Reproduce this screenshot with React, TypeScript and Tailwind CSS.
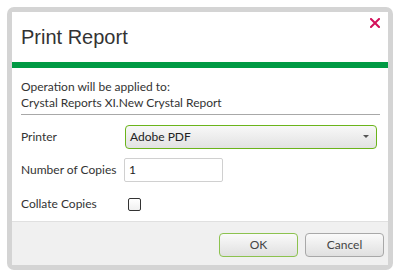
import React from "react";

export default function App() {
  const body = { fontFamily: "Lato, 'Noto Sans', sans-serif" };
  return (
    <div className="w-[400px] h-[277px] bg-white p-[7px]">
      <div className="w-[386px] h-[263px] rounded-[7px] bg-[#d4d4d4] p-[5px]">
        <div className="relative flex h-full flex-col bg-white" style={body}>
          <div className="h-[50px] pl-[9px] pt-[13px]">
            <div className="text-[20px] leading-[24px] text-[#333]" style={{ fontFamily: "'Liberation Sans', Arial, sans-serif" }}>
              Print Report
            </div>
          </div>
          <button className="absolute right-[6px] top-[4px] flex h-[14px] w-[14px] items-center justify-center">
            <svg width="10" height="10" viewBox="0 0 10 10">
              <path d="M1 1 L9 9 M9 1 L1 9" stroke="#d2105a" strokeWidth="2" strokeLinecap="square" />
            </svg>
          </button>
          <div className="h-[6px] bg-[#009a44]" />
          <div className="flex flex-1 flex-col pl-[9px] pr-[8px] pt-[11px] text-[12px] text-[#333]">
            <div className="leading-[16px]">Operation will be applied to:</div>
            <div className="leading-[16px]">Crystal Reports XI.New Crystal Report</div>
            <div className="mt-[3px] h-px bg-[#a8a8a8]" />
            <div className="mt-[10px] flex items-center">
              <div className="w-[104px]">Printer</div>
              <div className="flex h-[24px] w-[252px] items-center justify-between rounded-[4px] border-[1.5px] border-[#6bb41b] bg-gradient-to-b from-[#f8f8f8] to-[#e2e2e2] pl-[4px] pr-[7px] text-[#222]">
                <span>Adobe PDF</span>
                <svg width="6" height="4" viewBox="0 0 6 4"><path d="M0 0 L6 0 L3 3 Z" fill="#555" /></svg>
              </div>
            </div>
            <div className="mt-[9px] flex items-center">
              <div className="w-[103px]">Number of Copies</div>
              <div className="flex h-[24px] w-[99px] items-center rounded-[2px] border border-[#d0d0d0] pl-[4px] text-[#222]">1</div>
            </div>
            <div className="mt-[13px] flex items-center">
              <div className="w-[107px]">Collate Copies</div>
              <div className="h-[13px] w-[13px] rounded-[2px] border border-[#333] bg-gradient-to-b from-white to-[#f0f0f0]" />
            </div>
          </div>
          <div className="flex h-[44px] items-start justify-end gap-[7px] border-t border-[#e0e0e0] bg-[#f0f0f0] pr-[4px] pt-[11px] text-[12px] text-[#444]">
            <button className="h-[24px] w-[79px] rounded-[4px] border border-[#8cc24f] bg-gradient-to-b from-[#fafafa] to-[#e0e0e0]">OK</button>
            <button className="h-[24px] w-[79px] rounded-[4px] border border-[#a8a8a8] bg-gradient-to-b from-[#fafafa] to-[#e0e0e0]">Cancel</button>
          </div>
        </div>
      </div>
    </div>
  );
}
